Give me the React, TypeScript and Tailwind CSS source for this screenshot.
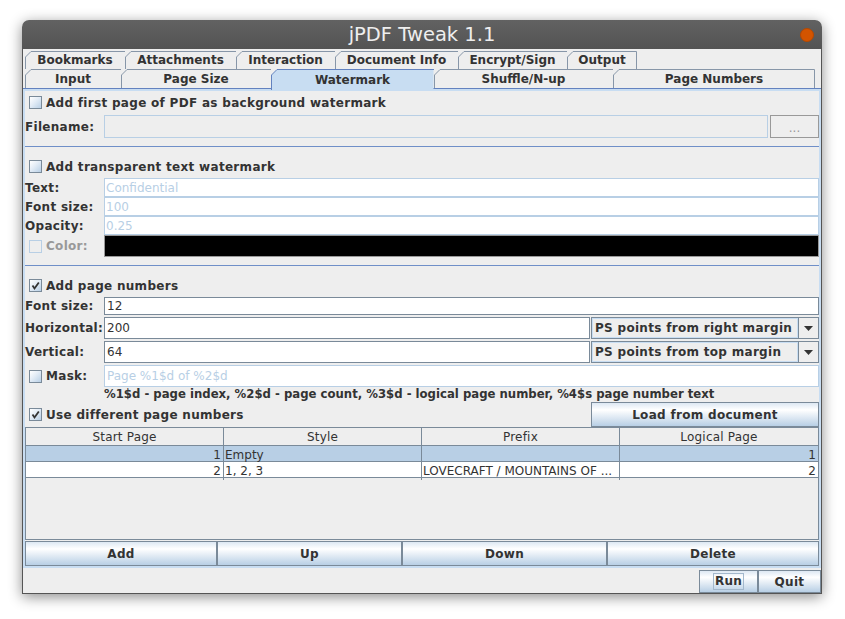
import React from "react";

type TabProps = { label: string; w: number; cls: string; h?: number; selected?: boolean; last?: boolean };

const Tab = ({ label, w, cls, h = 18, selected = false, last = false }: TabProps) => (
  <div className={`relative flex shrink-0 items-center justify-center font-bold ${cls} ${selected ? "z-10 -mb-[2px]" : ""}`}>
    <svg className="absolute left-0 top-0" width={w} height={h} viewBox={`0 0 ${w} ${h}`}>
      <path
        d={`M0.5 ${h} V6 L6 0.5 H${w - 0.5} V${h} Z`}
        fill={selected ? "#c8ddf2" : "#eeeeee"}
        stroke="none"
      />
      <path
        d={last ? `M0.5 ${h} V6 L6 0.5 H${w - 0.5} V${h}` : `M0.5 ${h} V6 L6 0.5 H${w}`}
        fill="none"
        stroke={selected ? "#6382bf" : "#8796a8"}
        strokeWidth="1"
      />
    </svg>
    <span className="relative">{label}</span>
  </div>
);

const Check = ({ checked = false, disabled = false }: { checked?: boolean; disabled?: boolean }) => (
  <span
    className={`flex h-[13px] w-[13px] shrink-0 items-center justify-center border ${
      disabled
        ? "border-[#b8cfe5] bg-[#eeeeee]"
        : "border-[#7a8a99] bg-[linear-gradient(135deg,#ffffff_0%,#e3ecf6_45%,#b8cfe5_100%)]"
    }`}
  >
    {checked && (
      <svg width="11" height="11" viewBox="0 0 11 11">
        <path d="M2.5 5.5 L4.5 8.5 L8.8 2.5" fill="none" stroke="#333333" strokeWidth="1.8" />
      </svg>
    )}
  </span>
);

const CheckRow = ({ label, checked = false }: { label: string; checked?: boolean }) => (
  <div className="flex h-[19px] items-center gap-[4px] pl-[4px] font-bold tracking-[0.3px]">
    <Check checked={checked} />
    <span>{label}</span>
  </div>
);

const Separator = () => (
  <div className="h-[19px] pt-[8px]">
    <div className="h-px bg-[#6f8fc8]" />
  </div>
);

const Arrow = () => (
  <svg width="9" height="5" viewBox="0 0 9 5">
    <path d="M0 0 H9 L4.5 5 Z" fill="#333333" />
  </svg>
);

const btnBg = "bg-[linear-gradient(to_bottom,#dde8f3_0%,#ffffff_30%,#b8cfe5_100%)]";

const App = () => {
  const headers = ["Start Page", "Style", "Prefix", "Logical Page"];

  return (
    <div className="h-[619px] w-[845px] overflow-hidden bg-white pl-[22px] pt-[20px] font-['DejaVu_Sans',sans-serif] text-[12px] text-[#333333]">
      <div className="flex w-[800px] flex-col rounded-t-[7px] shadow-[0_3px_14px_rgba(0,0,0,0.45)]">
        {/* Title bar */}
        <div className="relative flex h-[29px] items-center justify-center rounded-t-[7px] bg-[linear-gradient(to_bottom,#626262,#535353)] text-[19.5px] text-[#eeeeee]">
          jPDF Tweak 1.1
          <span className="absolute right-[8px] top-[8px] h-[14px] w-[14px] rounded-full border border-[#b54800] bg-[#d35400]" />
        </div>

        <div className="flex flex-col border-x border-b border-[#555555] bg-[#eeeeee]">
          {/* Tabs */}
          <div className="pl-[2px] pt-[2px]">
            <div className="flex h-[18px]">
              <Tab label="Bookmarks" w={100} cls="h-[18px] w-[100px]" />
              <Tab label="Attachments" w={111} cls="h-[18px] w-[111px]" />
              <Tab label="Interaction" w={99} cls="h-[18px] w-[99px]" />
              <Tab label="Document Info" w={123} cls="h-[18px] w-[123px]" />
              <Tab label="Encrypt/Sign" w={109} cls="h-[18px] w-[109px]" />
              <Tab label="Output" w={70} cls="h-[18px] w-[70px]" last />
            </div>
            <div className="flex h-[19px]">
              <Tab label="Input" w={96} h={19} cls="h-[19px] w-[96px]" />
              <Tab label="Page Size" w={150} h={19} cls="h-[19px] w-[150px]" />
              <Tab label="Watermark" w={163} h={21} cls="h-[21px] w-[163px]" selected />
              <Tab label="Shuffle/N-up" w={179} h={19} cls="h-[19px] w-[179px]" />
              <Tab label="Page Numbers" w={202} h={19} cls="h-[19px] w-[202px]" last />
            </div>
          </div>

          {/* Panel */}
          <div className="border-t border-[#6382bf]">
            <div className="flex flex-col border-2 border-[#c8ddf2] pt-[2px]">
              <CheckRow label="Add first page of PDF as background watermark" />
              <div className="mt-[3px] flex h-[23px] items-center">
                <span className="w-[79px] shrink-0 font-bold tracking-[0.3px]">Filename:</span>
                <div className="h-full flex-1 border border-[#b8cfe5] bg-[#eeeeee]" />
                <div className="ml-[2px] flex h-full w-[49px] items-center justify-center border border-[#999999] pt-[3px] text-[#999999]">
                  ...
                </div>
              </div>

              <Separator />

              <CheckRow label="Add transparent text watermark" />
              <div className="mt-[2px] flex flex-col">
                {[
                  ["Text:", "Confidential"],
                  ["Font size:", "100"],
                  ["Opacity:", "0.25"],
                ].map(([l, v]) => (
                  <div key={l} className="flex h-[19px] items-center">
                    <span className="w-[79px] shrink-0 font-bold tracking-[0.3px]">{l}</span>
                    <div className="flex h-full flex-1 items-center border border-[#b8cfe5] bg-white pl-[1px] text-[#b8cfe5]">
                      {v}
                    </div>
                  </div>
                ))}
                <div className="flex h-[22px] items-center">
                  <div className="flex w-[79px] shrink-0 items-center gap-[4px] pl-[4px] font-bold tracking-[0.3px] text-[#999999]">
                    <Check disabled />
                    <span>Color:</span>
                  </div>
                  <div className="h-full flex-1 border border-[#999999] bg-black" />
                </div>
              </div>

              <Separator />

              <CheckRow label="Add page numbers" checked />
              <div className="mt-[2px] flex h-[18px] items-center">
                <span className="w-[79px] shrink-0 font-bold tracking-[0.3px]">Font size:</span>
                <div className="flex h-full flex-1 items-center border border-[#7a8a99] bg-white pl-[2px]">12</div>
              </div>
              {[
                ["Horizontal:", "200", "PS points from right margin"],
                ["Vertical:", "64", "PS points from top margin"],
              ].map(([l, v, c]) => (
                <div key={l} className="mt-[2px] flex h-[22px] items-center">
                  <span className="w-[79px] shrink-0 whitespace-nowrap font-bold tracking-[0.3px]">{l}</span>
                  <div className="flex h-full flex-1 items-center border border-[#7a8a99] bg-white pl-[2px]">{v}</div>
                  <div className="ml-[1px] flex h-full w-[228px] border border-[#7a8a99] bg-[#eeeeee]">
                    <div className="flex flex-1 items-center border border-[#c8ddf2] pl-[2px] font-bold tracking-[0.3px]">{c}</div>
                    <div className="flex w-[20px] items-center justify-center border-l border-[#7a8a99]">
                      <Arrow />
                    </div>
                  </div>
                </div>
              ))}
              <div className="mt-[2px] flex h-[22px] items-center">
                <div className="flex w-[79px] shrink-0 items-center gap-[4px] pl-[4px] font-bold tracking-[0.3px]">
                  <Check />
                  <span>Mask:</span>
                </div>
                <div className="flex h-full flex-1 items-center border border-[#b8cfe5] bg-white pl-[2px] text-[#b8cfe5]">
                  Page %1$d of %2$d
                </div>
              </div>
              <div className="flex h-[15px] items-center whitespace-nowrap pl-[79px] text-[11.7px] font-bold">
                %1$d - page index, %2$d - page count, %3$d - logical page number, %4$s page number text
              </div>
              <div className="flex h-[25px] items-center justify-between">
                <CheckRow label="Use different page numbers" checked />
                <div className={`flex h-full w-[228px] items-center justify-center border border-[#7a8a99] font-bold tracking-[0.3px] ${btnBg}`}>
                  Load from document
                </div>
              </div>

              {/* Table */}
              <div className="flex h-[113px] flex-col border border-[#7a8a99] bg-[#eeeeee]">
                <div className="grid h-[18px] grid-cols-4 border-b border-[#7a8a99]">
                  {headers.map((h) => (
                    <div key={h} className="flex items-center justify-center border-r border-[#7a8a99] tracking-[0.2px] last:border-r-0">
                      {h}
                    </div>
                  ))}
                </div>
                <div className="grid h-[16px] grid-cols-4 border-b border-[#7a8a99] bg-[#b8cfe5]">
                  <div className="flex items-center justify-end border-r border-[#7a8a99] pr-[2px]">1</div>
                  <div className="flex items-center border-r border-[#7a8a99] pl-[1px]">Empty</div>
                  <div className="border-r border-[#7a8a99]" />
                  <div className="flex items-center justify-end pr-[2px]">1</div>
                </div>
                <div className="grid h-[16px] grid-cols-4 border-b border-[#7a8a99] bg-white">
                  <div className="flex items-center justify-end border-r border-[#7a8a99] pr-[2px]">2</div>
                  <div className="flex items-center border-r border-[#7a8a99] pl-[1px]">1, 2, 3</div>
                  <div className="flex items-center border-r border-[#7a8a99] pl-[1px]">LOVECRAFT / MOUNTAINS OF ...</div>
                  <div className="flex items-center justify-end pr-[2px]">2</div>
                </div>
              </div>

              <div className="mt-[1px] flex h-[25px] font-bold tracking-[0.3px]">
                <div className={`flex w-[192px] items-center justify-center border border-[#7a8a99] ${btnBg}`}>Add</div>
                <div className={`flex w-[185px] items-center justify-center border border-[#7a8a99] ${btnBg}`}>Up</div>
                <div className={`flex w-[205px] items-center justify-center border border-[#7a8a99] ${btnBg}`}>Down</div>
                <div className={`flex flex-1 items-center justify-center border border-[#7a8a99] ${btnBg}`}>Delete</div>
              </div>
            </div>
          </div>

          {/* Run / Quit */}
          <div className="mt-[2px] flex h-[23px] justify-end font-bold tracking-[0.3px]">
            <div className={`flex w-[59px] items-center justify-center border border-[#7a8a99] ${btnBg}`}>
              <span className="border border-[#a3b8cc] px-[1px] leading-[15px]">Run</span>
            </div>
            <div className={`flex w-[63px] items-center justify-center border border-[#7a8a99] ${btnBg}`}>Quit</div>
          </div>
        </div>
      </div>
    </div>
  );
};

export default App;
